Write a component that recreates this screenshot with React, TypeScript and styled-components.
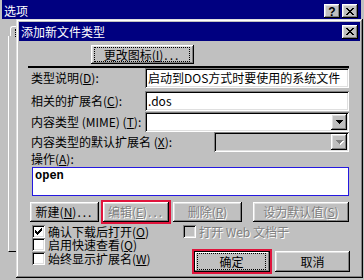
import React, { FC, ReactNode } from 'react';
import styled, { createGlobalStyle, css } from 'styled-components';

const GlobalStyle = createGlobalStyle`
  html, body {
    margin: 0;
    padding: 0;
    background: #c0c0c0;
  }
  body {
    font-family: "Noto Sans CJK SC", "Liberation Sans", sans-serif;
    font-size: 12px;
    color: #000;
  }
`;

const raised = css`
  box-shadow: inset -1px -1px #000, inset 1px 1px #fff, inset -2px -2px #808080, inset 2px 2px #dfdfdf;
`;

const sunken = css`
  box-shadow: inset 1px 1px #808080, inset -1px -1px #fff, inset 2px 2px #000, inset -2px -2px #dfdfdf;
`;

const disabledText = css`
  color: #808080;
  text-shadow: 1px 1px 0 #fff;
`;

// little bitmap glyphs, like the win95 ones
const CLOSE_GLYPH = ['XX....XX', '.XX..XX.', '..XXXX..', '...XX...', '..XXXX..', '.XX..XX.', 'XX....XX'];
const CHECK_GLYPH = ['......X', '.....XX', 'X...XXX', 'XX.XXX.', 'XXXXX..', '.XXX...', '..X....'];
const ARROW_GLYPH = ['XXXXXXX', '.XXXXX.', '..XXX..', '...X...'];

type GlyphProps = {
  rows: string[];
  disabled?: boolean;
};

const PixelGlyph: FC<GlyphProps> = ({ rows, disabled }) => {
  const layers = disabled
    ? [
        { color: '#fff', d: 1 },
        { color: '#808080', d: 0 },
      ]
    : [{ color: '#000', d: 0 }];
  return (
    <svg width={rows[0].length + 1} height={rows.length + 1} shapeRendering="crispEdges">
      {layers.map((layer) =>
        rows.flatMap((row, y) =>
          row
            .split('')
            .map((c, x) =>
              c === 'X' ? (
                <rect key={`${layer.color}-${x}-${y}`} x={x + layer.d} y={y + layer.d} width={1} height={1} fill={layer.color} />
              ) : null
            )
        )
      )}
    </svg>
  );
};

const Desktop = styled.div`
  position: relative;
  width: 364px;
  height: 280px;
  overflow: hidden;
  background: #c0c0c0;
`;

const OuterWindow = styled.div`
  display: flex;
  flex-direction: column;
  height: 100%;
  padding: 0 3px 0 2px;
  box-sizing: border-box;
`;

const TitleBar = styled.div<{ $top: number; $right: number }>`
  display: flex;
  align-items: center;
  flex-shrink: 0;
  height: 19px;
  padding: ${(p) => p.$top}px ${(p) => p.$right}px 0 2px;
  box-sizing: border-box;
  background: #000080;
  color: #fff;
`;

const TitleText = styled.span`
  flex: 1;
  font-size: 12px;
  line-height: 14px;
  white-space: nowrap;
`;

const CaptionButton = styled.span<{ $gap?: number }>`
  display: flex;
  align-items: center;
  justify-content: center;
  width: 16px;
  height: 14px;
  margin-left: ${(p) => p.$gap ?? 0}px;
  padding-top: 1px;
  box-sizing: border-box;
  background: #c0c0c0;
  color: #000;
  font: bold 12px/12px "Liberation Sans", sans-serif;
  ${raised}
`;

const OuterBody = styled.div`
  display: flex;
  flex-direction: column;
  padding: 7px 0 0 6px;
`;

const TabHeader = styled.div`
  width: 40px;
  height: 10px;
  margin-left: 2px;
  padding: 2px 0 0 4px;
  box-sizing: border-box;
  border-top: 1px solid #fff;
  border-left: 1px solid #fff;
  border-top-left-radius: 3px;
`;

const TabFocus = styled.div`
  height: 8px;
  border-left: 1px dotted #000;
`;

const TabPage = styled.div`
  height: 215px;
  border-left: 1px solid #fff;
  border-bottom: 1px solid #000;
`;

const Dialog = styled.div`
  position: absolute;
  left: 16px;
  top: 19px;
  width: 347px;
  height: 259px;
  padding: 3px;
  box-sizing: border-box;
  display: flex;
  flex-direction: column;
  background: #c0c0c0;
  box-shadow: inset -1px -1px #000, inset 1px 1px #dfdfdf, inset -2px -2px #808080, inset 2px 2px #fff;
`;

const DialogBody = styled.div`
  display: flex;
  flex-direction: column;
  flex: 1;
`;

const IconRow = styled.div`
  display: flex;
  padding: 4px 0 0 72px;
`;

const PushButton = styled.button<{ $w: number; $h?: number; $default?: boolean }>`
  display: flex;
  align-items: stretch;
  justify-content: center;
  width: ${(p) => p.$w}px;
  height: ${(p) => p.$h ?? 20}px;
  margin: 0;
  padding: 0;
  border: none;
  background: #c0c0c0;
  color: #000;
  font: 12px/14px "Noto Sans CJK SC", "Liberation Sans", sans-serif;
  white-space: nowrap;
  ${raised}
  ${(p) =>
    p.$default &&
    css`
      box-shadow: inset 0 0 0 1px #000, inset -2px -2px #808080, inset 2px 2px #fff;
    `}

  &:disabled {
    ${disabledText}
  }
`;

const ButtonFace = styled.span`
  display: flex;
  align-items: center;
  justify-content: center;
  flex: 1;
`;

const FocusRing = styled.span`
  display: flex;
  align-items: center;
  justify-content: center;
  flex: 1;
  margin: 3px 5px 3px 4px;
  outline: 1px dotted #000;
`;

const Dots = styled.span`
  letter-spacing: 2px;
  margin-left: 1px;
`;

const Marked = styled.span`
  display: flex;
  outline: 2px solid #e0143c;
`;

const Separator = styled.div`
  width: 321px;
  height: 2px;
  margin: 2px 0 0 9px;
  background: #000;
`;

const FieldRow = styled.div<{ $gap: number }>`
  display: flex;
  align-items: center;
  justify-content: space-between;
  width: 318px;
  height: 20px;
  margin: ${(p) => p.$gap}px 0 0 12px;
`;

const FieldLabel = styled.span`
  font-size: 12px;
  line-height: 14px;
  white-space: nowrap;
`;

const TextBox = styled.div<{ $w: number }>`
  display: flex;
  align-items: center;
  width: ${(p) => p.$w}px;
  height: 20px;
  padding: 0 3px;
  box-sizing: border-box;
  background: #fff;
  font-size: 12px;
  line-height: 14px;
  white-space: nowrap;
  overflow: hidden;
  ${sunken}
`;

const ComboBox = styled.div<{ $w: number; $disabled?: boolean }>`
  display: flex;
  justify-content: flex-end;
  width: ${(p) => p.$w}px;
  height: 20px;
  padding: 2px;
  box-sizing: border-box;
  background: ${(p) => (p.$disabled ? '#c0c0c0' : '#fff')};
  ${sunken}
`;

const DropButton = styled.span`
  display: flex;
  align-items: center;
  justify-content: center;
  width: 16px;
  height: 16px;
  padding: 1px 0 0 1px;
  box-sizing: border-box;
  background: #c0c0c0;
  ${raised}
`;

const ActionLabel = styled.div`
  height: 15px;
  margin-left: 12px;
  font-size: 12px;
  line-height: 13px;
`;

const ListBox = styled.div`
  width: 317px;
  height: 29px;
  margin-left: 13px;
  padding: 2px 2px;
  box-sizing: border-box;
  border: 1px solid #2418e0;
  background: #fff;
  font: bold 12px/13px "Liberation Mono", monospace;
`;

const ButtonRow = styled.div`
  display: flex;
  gap: 4px;
  margin: 6px 0 0 11px;
`;

const Spacer = styled.span<{ $w: number }>`
  width: ${(p) => p.$w}px;
`;

const BottomArea = styled.div`
  display: flex;
  margin: 3px 0 0 13px;
`;

const CheckColumn = styled.div`
  display: flex;
  flex-direction: column;
  width: 151px;
`;

const RightColumn = styled.div`
  display: flex;
  flex-direction: column;
`;

const CheckRow = styled.div<{ $gap?: number; $disabled?: boolean }>`
  display: flex;
  align-items: center;
  gap: 3px;
  height: 13px;
  margin-top: ${(p) => p.$gap ?? 0}px;
  ${(p) => p.$disabled && disabledText}
`;

const CheckLabel = styled.span`
  font-size: 12px;
  line-height: 13px;
  white-space: nowrap;
`;

const CheckBox = styled.span<{ $disabled?: boolean }>`
  display: flex;
  align-items: center;
  justify-content: center;
  flex-shrink: 0;
  width: 13px;
  height: 13px;
  padding: 1px 0 0 1px;
  box-sizing: border-box;
  background: ${(p) => (p.$disabled ? '#c0c0c0' : '#fff')};
  ${sunken}
`;

const DialogButtons = styled.div`
  display: flex;
  gap: 5px;
  margin: 13px 0 0 11px;
`;

type CheckProps = {
  checked?: boolean;
  disabled?: boolean;
  gap?: number;
  children: ReactNode;
};

const Check: FC<CheckProps> = ({ checked, disabled, gap, children }) => (
  <CheckRow $gap={gap} $disabled={disabled}>
    <CheckBox $disabled={disabled}>{checked && <PixelGlyph rows={CHECK_GLYPH} />}</CheckBox>
    <CheckLabel>{children}</CheckLabel>
  </CheckRow>
);

const App: FC = () => (
  <>
    <GlobalStyle />
    <Desktop>
      <OuterWindow>
        <TitleBar $top={3} $right={3}>
          <TitleText>选项</TitleText>
          <CaptionButton>?</CaptionButton>
          <CaptionButton $gap={2}>
            <PixelGlyph rows={CLOSE_GLYPH} />
          </CaptionButton>
        </TitleBar>
        <OuterBody>
          <TabHeader>
            <TabFocus />
          </TabHeader>
          <TabPage />
        </OuterBody>
      </OuterWindow>

      <Dialog>
        <TitleBar $top={0} $right={2}>
          <TitleText>添加新文件类型</TitleText>
          <CaptionButton>
            <PixelGlyph rows={CLOSE_GLYPH} />
          </CaptionButton>
        </TitleBar>
        <DialogBody>
          <IconRow>
            <PushButton $w={103} $h={19}>
              <FocusRing>
                更改图标(<u>I</u>)<Dots>...</Dots>
              </FocusRing>
            </PushButton>
          </IconRow>
          <Separator />

          <FieldRow $gap={0}>
            <FieldLabel>
              类型说明(<u>D</u>):
            </FieldLabel>
            <TextBox $w={204}>启动到DOS方式时要使用的系统文件</TextBox>
          </FieldRow>
          <FieldRow $gap={3}>
            <FieldLabel>
              相关的扩展名(<u>C</u>):
            </FieldLabel>
            <TextBox $w={204}>.dos</TextBox>
          </FieldRow>
          <FieldRow $gap={1}>
            <FieldLabel>
              内容类型 (MIME) (<u>T</u>):
            </FieldLabel>
            <ComboBox $w={204}>
              <DropButton>
                <PixelGlyph rows={ARROW_GLYPH} />
              </DropButton>
            </ComboBox>
          </FieldRow>
          <FieldRow $gap={0}>
            <FieldLabel>
              内容类型的默认扩展名 (<u>X</u>):
            </FieldLabel>
            <ComboBox $w={135} $disabled>
              <DropButton>
                <PixelGlyph rows={ARROW_GLYPH} disabled />
              </DropButton>
            </ComboBox>
          </FieldRow>

          <ActionLabel>
            操作(<u>A</u>):
          </ActionLabel>
          <ListBox>open</ListBox>

          <ButtonRow>
            <PushButton $w={69}>
              <ButtonFace>
                新建(<u>N</u>)<Dots>...</Dots>
              </ButtonFace>
            </PushButton>
            <Marked>
              <PushButton $w={66} disabled>
                <ButtonFace>
                  编辑(<u>E</u>)<Dots>...</Dots>
                </ButtonFace>
              </PushButton>
            </Marked>
            <PushButton $w={69} disabled>
              <ButtonFace>
                删除(<u>R</u>)
              </ButtonFace>
            </PushButton>
            <Spacer $w={3} />
            <PushButton $w={96} disabled>
              <ButtonFace>
                设为默认值(<u>S</u>)
              </ButtonFace>
            </PushButton>
          </ButtonRow>

          <BottomArea>
            <CheckColumn>
              <Check checked>
                确认下载后打开(<u>O</u>)
              </Check>
              <Check>
                启用快速查看(<u>Q</u>)
              </Check>
              <Check gap={1}>
                始终显示扩展名(<u>W</u>)
              </Check>
            </CheckColumn>
            <RightColumn>
              <Check disabled>打开 Web 文档于</Check>
              <DialogButtons>
                <Marked>
                  <PushButton $w={76} $h={21} $default>
                    <FocusRing>确定</FocusRing>
                  </PushButton>
                </Marked>
                <PushButton $w={75} $h={21}>
                  <ButtonFace>取消</ButtonFace>
                </PushButton>
              </DialogButtons>
            </RightColumn>
          </BottomArea>
        </DialogBody>
      </Dialog>
    </Desktop>
  </>
);

export default App;
